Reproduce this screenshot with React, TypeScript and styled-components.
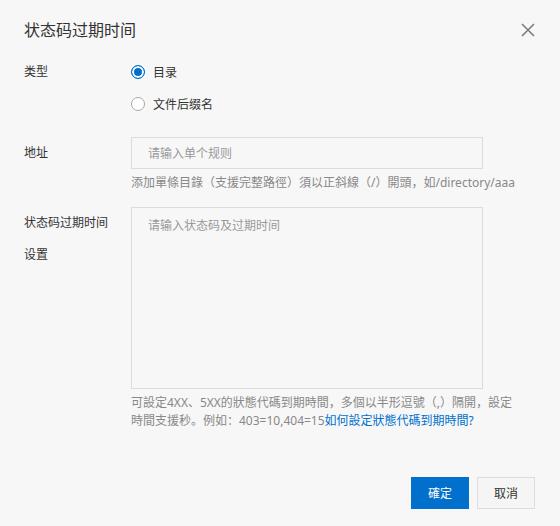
import React, { useState } from 'react';
import styled, { createGlobalStyle } from 'styled-components';

const GlobalStyle = createGlobalStyle`
    body {
        margin: 0;
        background: #f7f7f7;
        font-family: "Noto Sans", "Noto Sans CJK SC", sans-serif;
        color: #333;
    }
`;

// dialog shell
const Dialog = styled.div`
    width: 560px;
    height: 526px;
    display: flex;
    flex-direction: column;
    background: #f7f7f7;
    box-sizing: border-box;
`;

const Header = styled.div`
    display: flex;
    align-items: center;
    justify-content: space-between;
    padding: 18px 25px 14px 24px;
`;

const Title = styled.h2`
    margin: 0;
    font-size: 16px;
    line-height: 24px;
    font-weight: 400;
    color: #333;
`;

const CloseButton = styled.button`
    width: 14px;
    height: 14px;
    padding: 0;
    border: none;
    background: none;
    cursor: pointer;
    display: flex;

    & svg {
        display: block;
    }
`;

const Body = styled.div`
    flex: 1;
    padding: 0 24px;
`;

const FormItem = styled.div<{ $gap: number }>`
    display: grid;
    grid-template-columns: 107px 352px;
    margin-bottom: ${(p) => p.$gap}px;
`;

const Label = styled.div`
    font-size: 12px;
    line-height: 32px;
    padding-right: 16px;
    color: #333;
`;

const Control = styled.div`
    display: flex;
    flex-direction: column;
`;

const RadioOption = styled.label`
    display: flex;
    align-items: center;
    height: 32px;
    font-size: 12px;
    color: #333;
    cursor: pointer;
`;

const RadioDot = styled.span<{ $checked: boolean }>`
    width: 14px;
    height: 14px;
    box-sizing: border-box;
    border-radius: 50%;
    margin-right: 8px;
    border: 1px solid ${(p) => (p.$checked ? '#0070cc' : '#a8a8a8')};
    background: ${(p) => (p.$checked ? '#0070cc' : '#fff')};
    box-shadow: ${(p) => (p.$checked ? 'inset 0 0 0 2px #fff' : 'none')};
`;

const TextInput = styled.input`
    height: 32px;
    box-sizing: border-box;
    border: 1px solid #dcdcdc;
    background: transparent;
    padding: 0 16px;
    font-size: 12px;
    font-family: inherit;
    color: #333;
    outline: none;

    &::placeholder {
        color: #999;
    }
`;

const TextArea = styled.textarea`
    height: 182px;
    box-sizing: border-box;
    border: 1px solid #dcdcdc;
    background: transparent;
    padding: 9px 16px;
    font-size: 12px;
    line-height: 18px;
    font-family: inherit;
    color: #333;
    resize: none;
    outline: none;

    &::placeholder {
        color: #999;
    }
`;

const Help = styled.div`
    margin-top: 5px;
    width: 400px;
    font-size: 12px;
    line-height: 18px;
    color: #888;
    white-space: nowrap;
`;

const HelpLink = styled.a`
    color: #0070cc;
    text-decoration: none;
`;

const Footer = styled.div`
    display: flex;
    justify-content: flex-end;
    gap: 8px;
    padding: 0 25px 17px 0;
`;

const Button = styled.button<{ $primary?: boolean }>`
    width: 58px;
    height: 32px;
    box-sizing: border-box;
    font-size: 12px;
    font-family: inherit;
    cursor: pointer;
    border: 1px solid ${(p) => (p.$primary ? '#0070cc' : '#dcdcdc')};
    background: ${(p) => (p.$primary ? '#0070cc' : '#f5f5f5')};
    color: ${(p) => (p.$primary ? '#fff' : '#333')};
`;

const App: React.FC = () => {
    const [kind, setKind] = useState<'dir' | 'suffix'>('dir');

    return (
        <Dialog>
            <GlobalStyle />
            <Header>
                <Title>状态码过期时间</Title>
                <CloseButton aria-label="close">
                    <svg width="14" height="14" viewBox="0 0 14 14">
                        <path d="M1 1L13 13M13 1L1 13" stroke="#7d7d7d" strokeWidth="1.6" />
                    </svg>
                </CloseButton>
            </Header>

            <Body>
                <FormItem $gap={17}>
                    <Label>类型</Label>
                    <Control>
                        <RadioOption onClick={() => setKind('dir')}>
                            <RadioDot $checked={kind === 'dir'} />
                            目录
                        </RadioOption>
                        <RadioOption onClick={() => setKind('suffix')}>
                            <RadioDot $checked={kind === 'suffix'} />
                            文件后缀名
                        </RadioOption>
                    </Control>
                </FormItem>

                <FormItem $gap={15}>
                    <Label>地址</Label>
                    <Control>
                        <TextInput placeholder="请输入单个规则" />
                        <Help>添加單條目錄（支援完整路徑）須以正斜線（/）開頭，如/directory/aaa</Help>
                    </Control>
                </FormItem>

                <FormItem $gap={0}>
                    <Label>状态码过期时间设置</Label>
                    <Control>
                        <TextArea placeholder="请输入状态码及过期时间" />
                        <Help>
                            可設定4XX、5XX的狀態代碼到期時間，多個以半形逗號（,）隔開，設定
                            <br />
                            時間支援秒。例如：403=10,404=15
                            <HelpLink href="#">如何設定狀態代碼到期時間?</HelpLink>
                        </Help>
                    </Control>
                </FormItem>
            </Body>

            <Footer>
                <Button $primary>確定</Button>
                <Button>取消</Button>
            </Footer>
        </Dialog>
    );
};

export default App;
